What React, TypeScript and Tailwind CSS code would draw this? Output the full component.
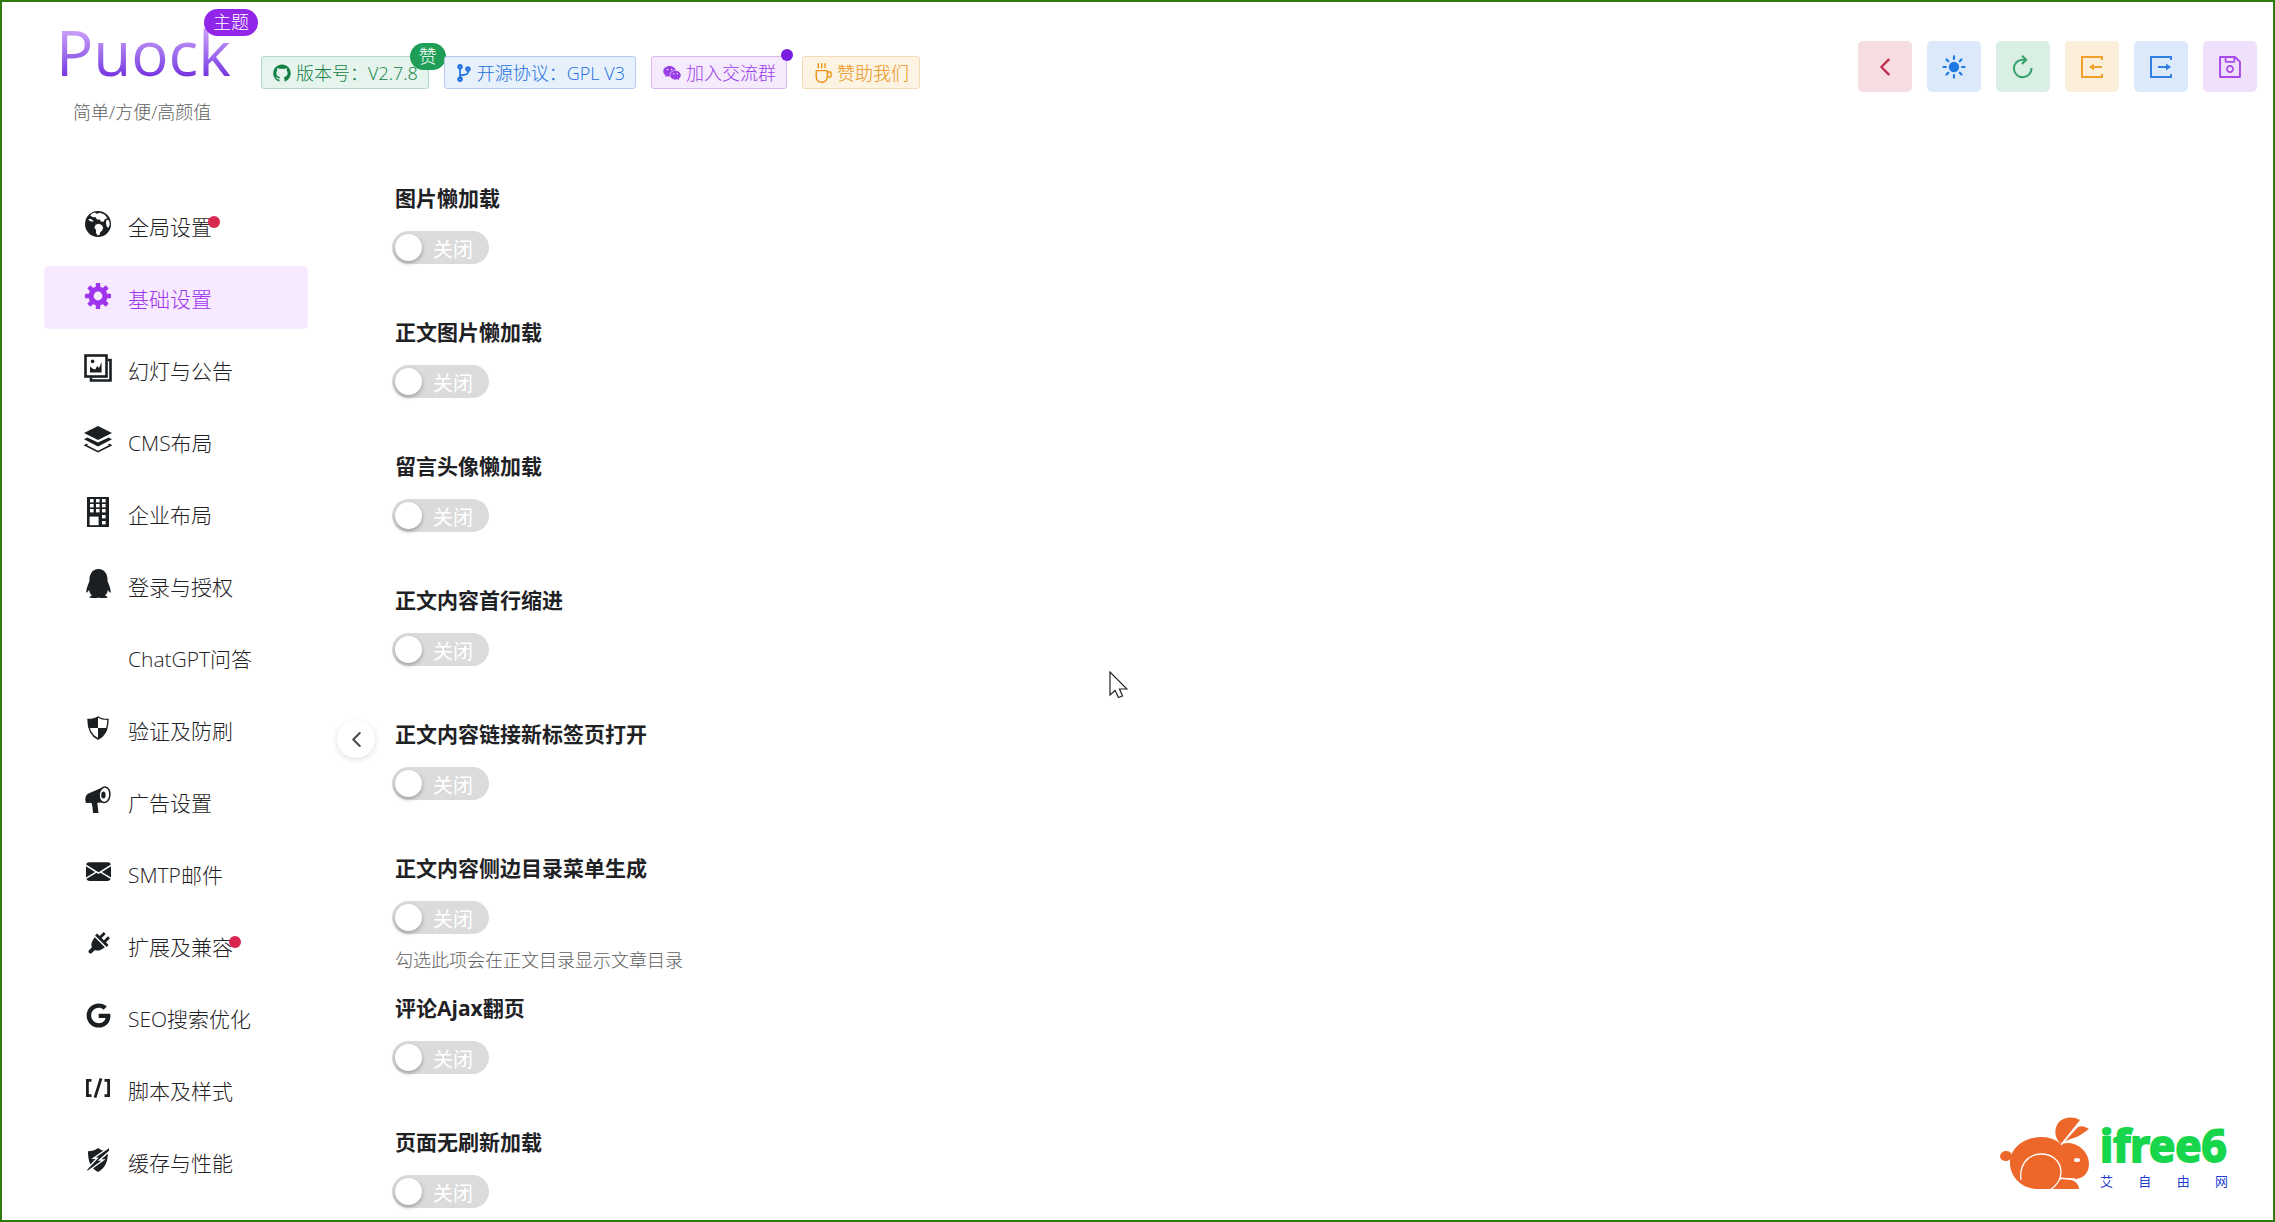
import { useState } from "react";
import type { ReactNode } from "react";
import { AiFillWechat, AiOutlineCoffee, AiOutlineGithub, AiOutlineSave } from "react-icons/ai";
import { BsEnvelopeFill } from "react-icons/bs";
import { FaCodeBranch, FaGoogle, FaQq } from "react-icons/fa";
import { ImPowerCord } from "react-icons/im";
import { IoChevronBack, IoSunny } from "react-icons/io5";

/* ---------- icons ---------- */

function EarthIcon() {
    return (
        <svg viewBox="0 0 26 26" width="26" height="26" fill="currentColor" aria-hidden="true">
            <circle cx="13" cy="13" r="13" />
            <path fill="#fff" d="M7 2.600 10 1.600l1.600 1.200 3.400-1 4.400 1.600 3 3.600-2.800 1.600-1 2.200-2.600-.2-1.400-2.200-2.600.2L10.500 6 8 6.200 5.200 4.400z" />
            <path fill="#fff" d="m3 8.600 2.600-.8 3 2.200-1 .8-2.600-.8z" />
            <path fill="#fff" d="m21.600 8.600 2.400 1 .8 3.400-1.200 3.800-1.800-1-.8-3.600z" />
            <path fill="#fff" d="m10.600 13.800 3-1 3.200 1.200 1.400 2.400-1 3.200-2 1.600-.6 2.600-1.800.6-1.800-2.400v-3l-1.600-2.400z" />
        </svg>
    );
}

function GearIcon() {
    return (
        <svg viewBox="0 0 26 26" width="26" height="26" fill="currentColor" aria-hidden="true">
            {[0, 45, 90, 135].map((deg) => (
                <rect key={deg} x="10.800" y="0" width="4.400" height="26" rx="0.500" transform={`rotate(${deg} 13 13)`} />
            ))}
            <circle cx="13" cy="13" r="9.600" />
            <circle cx="13" cy="13" r="4.400" fill="#f7eafe" />
        </svg>
    );
}

function AlbumIcon() {
    return (
        <svg viewBox="0 0 28 28" width="28" height="28" fill="none" stroke="currentColor" strokeWidth="2.600" aria-hidden="true">
            <path d="M23.500 6h3v20.500H7v-3" />
            <rect x="1.500" y="1.500" width="21" height="21" />
            <path d="M6 18.400v-6l2.400 2.200 2.800 1 2-3.600 1.800 2L17.600 8v10.400z" fill="currentColor" stroke="none" />
            <circle cx="8.600" cy="7.400" r="1.800" fill="currentColor" stroke="none" />
        </svg>
    );
}

function LayersIcon() {
    return (
        <svg viewBox="0 0 28 27" width="28" height="27" fill="currentColor" aria-hidden="true">
            <path d="m14 0 14 7-14 7L0 7z" />
            <path d="m3.400 11.600 10.600 5 10.600-5L28 13.300 14 20.400 0 13.300z" />
            <path d="m3.400 18.200-2 1L14 25.600l12.600-6.400-2-1" fill="none" stroke="currentColor" strokeWidth="1.600" />
        </svg>
    );
}

function TowerIcon() {
    const cells = [
        [3, 2], [9, 2], [15, 2],
        [3, 7], [9, 7], [15, 7],
        [3, 12], [9, 12], [15, 12],
        [15, 18], [15, 24],
    ];
    return (
        <svg viewBox="0 0 22 30" width="22" height="30" fill="currentColor" aria-hidden="true">
            <path d="M0 0h22v30H0z" />
            {cells.map(([x, y]) => (
                <rect key={`${x}-${y}`} x={x} y={y} width="3.600" height="3.400" fill="#fff" />
            ))}
            <path fill="#fff" d="M2.600 19.600h9v8.600h-9z" />
        </svg>
    );
}

function ShieldIcon() {
    return (
        <svg viewBox="0 0 22 24" width="22" height="24" aria-hidden="true">
            <path d="M11 1c3 2 6.500 2.400 10 2.400C21 12 19 19 11 23 3 19 1 12 1 3.400 4.500 3.400 8 3 11 1z" fill="none" stroke="currentColor" strokeWidth="1.400" />
            <path d="M11 1v11H1.600C1 9 1 6 1 3.400 4.500 3.400 8 3 11 1zM11 12h9.400C19.400 17 16.500 20.500 11 23z" fill="currentColor" />
        </svg>
    );
}

function HornIcon() {
    return (
        <svg viewBox="0 0 26 27" width="26" height="27" fill="currentColor" aria-hidden="true">
            <path d="M19 .8 3.500 7.500C.5 9-.5 13 1 17l18-.5z" />
            <path d="m6 15 6-.5.500 4 1 8.500H8l-.5-6z" />
            <ellipse cx="19.500" cy="8.800" rx="5.400" ry="7.800" fill="#fff" stroke="currentColor" strokeWidth="1.500" transform="rotate(6 19.500 8.800)" />
            <ellipse cx="18.400" cy="9" rx="2.200" ry="3.600" />
        </svg>
    );
}

function ScriptIcon() {
    return (
        <svg viewBox="0 0 26 20" width="26" height="20" fill="none" stroke="currentColor" strokeWidth="2.800" aria-hidden="true">
            <path d="M6.500 2.400H2.400v15.200h4.100M19.500 2.400h4.100v15.200h-4.100M16 .4 10 19.600" />
        </svg>
    );
}

function FlashShieldIcon() {
    return (
        <svg viewBox="0 0 22 24" width="22" height="24" fill="currentColor" aria-hidden="true">
            <path d="M11 0c3 2.500 6 3.200 10 3.200C21 12 19 20 11 24 3 20 1 12 1 3.200 5 3.200 8 2.500 11 0z" />
            <path d="M24-2 6.500 10.200h3.700L-1 22l1.500 1.500L16.500 12h-4L24 2z" stroke="#fff" strokeWidth="1.400" />
        </svg>
    );
}

function ReloadIcon() {
    return (
        <svg viewBox="0 0 22 24" width="22" height="24" fill="none" stroke="currentColor" strokeWidth="2" aria-hidden="true">
            <path d="M19.500 13a8.800 8.800 0 1 1-8.700-8.300H14" />
            <path d="m10 .8 4.200 3.900L10 9" />
        </svg>
    );
}

function ImportIcon() {
    return (
        <svg viewBox="0 0 22 22" width="22" height="22" fill="none" stroke="currentColor" strokeWidth="2" aria-hidden="true">
            <path d="M21 4V1H1v20h20v-3M21 11h-9" />
            <path d="m8 11 5-3.500v7z" fill="currentColor" stroke="none" />
        </svg>
    );
}

function ExportIcon() {
    return (
        <svg viewBox="0 0 22 22" width="22" height="22" fill="none" stroke="currentColor" strokeWidth="2" aria-hidden="true">
            <path d="M21 4V1H1v20h20v-3M8 11h9" />
            <path d="m21 11-5-3.500v7z" fill="currentColor" stroke="none" />
        </svg>
    );
}

function Rabbit() {
    return (
        <svg viewBox="0 0 90 74" width="90" height="74" fill="#ec6729" aria-hidden="true">
            <ellipse cx="6" cy="39" rx="6" ry="5" transform="rotate(-12 6 39)" />
            <path d="M42 20c8 0 14 3 19 7 3-1 5-1 8-1 11 1 20 10 20 21 0 9-6 15-15 15-5 0-10-1-14-1l-6 10c-3 1-8 1-16 1-17 0-28-13-28-26 0-15 14-26 32-26z" />
            <path d="M49 72c2-6 8-10 16-10 8 0 14 4 14 10z" />
            <path d="M60 26c-6-6-6-15-1-21 5-5 14-6 21-2L61 27z" />
            <path d="M64 25 78 10c4-2 8 0 11 2-5 3-9 7-15 9-4 1-7 2-10 4z" />
            <path d="M21 63c-2-14 6-26 20-26 12 0 20 8 20 18 0 8-5 14-11 18M60 61c6 1 10 1 15 1M61 28 80 5" fill="none" stroke="#fff" strokeWidth="1.300" />
            <ellipse cx="77" cy="43" rx="3" ry="2" fill="#fff" />
        </svg>
    );
}

/* ---------- data ---------- */

const menu: { label: string; icon?: ReactNode; dot?: boolean }[] = [
    { label: "全局设置", icon: <EarthIcon />, dot: true },
    { label: "基础设置", icon: <GearIcon /> },
    { label: "幻灯与公告", icon: <AlbumIcon /> },
    { label: "CMS布局", icon: <LayersIcon /> },
    { label: "企业布局", icon: <TowerIcon /> },
    { label: "登录与授权", icon: <FaQq size={29} /> },
    { label: "ChatGPT问答" },
    { label: "验证及防刷", icon: <ShieldIcon /> },
    { label: "广告设置", icon: <HornIcon /> },
    { label: "SMTP邮件", icon: <BsEnvelopeFill size={25} /> },
    { label: "扩展及兼容", icon: <ImPowerCord size={23} />, dot: true },
    { label: "SEO搜索优化", icon: <FaGoogle size={25} /> },
    { label: "脚本及样式", icon: <ScriptIcon /> },
    { label: "缓存与性能", icon: <FlashShieldIcon /> },
];

const actions = [
    { label: "返回", icon: <IoChevronBack size={26} />, style: "bg-[#f6dde1] text-[#c0304f]" },
    { label: "切换主题", icon: <IoSunny size={26} />, style: "bg-[#dce9fb] text-[#1f7ae5]" },
    { label: "重置", icon: <ReloadIcon />, style: "bg-[#d9efe3] text-[#35a06a]" },
    { label: "导入", icon: <ImportIcon />, style: "bg-[#fbeeda] text-[#f0a02b]" },
    { label: "导出", icon: <ExportIcon />, style: "bg-[#dce9fb] text-[#2f7fe5]" },
    { label: "保存", icon: <AiOutlineSave size={28} />, style: "bg-[#f0e0fb] text-[#a94bea]" },
];

const options: { label: string; desc?: string }[] = [
    { label: "图片懒加载" },
    { label: "正文图片懒加载" },
    { label: "留言头像懒加载" },
    { label: "正文内容首行缩进" },
    { label: "正文内容链接新标签页打开" },
    { label: "正文内容侧边目录菜单生成", desc: "勾选此项会在正文目录显示文章目录" },
    { label: "评论Ajax翻页" },
    { label: "页面无刷新加载" },
];

/* ---------- parts ---------- */

function Tag({ icon, style, children }: { icon: ReactNode; style: string; children: ReactNode }) {
    return (
        <a href="#" className={`relative flex h-[33px] items-center gap-1 rounded-[3px] border px-[10px] text-lg leading-none whitespace-nowrap ${style}`}>
            {icon}
            {children}
        </a>
    );
}

function Option({ label, desc }: { label: string; desc?: string }) {
    const [on, setOn] = useState(false);
    return (
        <div>
            <label htmlFor={label} className="block px-[3px] text-[21px] leading-8 font-bold text-[#1f2225]">
                {label}
            </label>
            <div className="relative mt-[17px] h-[33px] w-[97px]">
                <input
                    id={label}
                    type="checkbox"
                    role="switch"
                    checked={on}
                    onChange={() => setOn(!on)}
                    className="peer block h-full w-full cursor-pointer appearance-none rounded-full bg-[#dbdbdb] checked:bg-[#a855f7]"
                />
                <span className="pointer-events-none absolute top-[3px] left-[3px] size-[27px] rounded-full bg-white shadow-[0_2px_4px_rgba(0,0,0,0.3)] peer-checked:left-[67px]" />
                <span className="pointer-events-none absolute top-0.5 left-[41px] text-xl leading-[33px] font-normal text-white peer-checked:left-4">
                    {on ? "开启" : "关闭"}
                </span>
            </div>
            {desc ? <p className="h-[58px] px-[3px] pt-[10px] text-lg leading-8 text-[#606060]">{desc}</p> : <div className="h-[52px]" />}
        </div>
    );
}

export default function App() {
    const [active, setActive] = useState(1);

    return (
        <div className="relative flex h-screen flex-col overflow-hidden border-2 border-[#2f7a0f] bg-white font-['Open_Sans','Noto_Sans_CJK_SC',sans-serif] font-light text-[#1f2225]">
            <header className="flex shrink-0 items-start pr-4 pl-[54px]">
                <div className="relative w-[174px] pt-[17px]">
                    <h1 className="bg-gradient-to-b from-[#c79bf7] from-20% to-[#7a35e0] to-85% bg-clip-text text-[62px] leading-[66px] font-normal text-transparent">Puock</h1>
                    <span className="absolute top-[7px] left-[148px] rounded-full bg-[#9125e8] px-[9px] text-lg leading-[27px] whitespace-nowrap text-white">主题</span>
                    <p className="px-[17px] pt-[11px] text-lg leading-8 whitespace-nowrap text-[#606060]">简单/方便/高颜值</p>
                </div>

                <div className="flex gap-[15px] pt-[54px] pl-[31px]">
                    <Tag icon={<AiOutlineGithub size={20} />} style="border-[#b5d8cb] bg-[#e5f4ed] text-[#138046]">
                        版本号：V2.7.8
                        <span className="absolute -top-[14px] -right-[18px] rounded-full bg-[#1f9e58] px-[9px] leading-[27px] text-white">赞</span>
                    </Tag>
                    <Tag icon={<FaCodeBranch size={18} />} style="border-[#b3cbee] bg-[#e6f1fc] text-[#1f6fdd]">
                        开源协议：GPL V3
                    </Tag>
                    <Tag icon={<AiFillWechat size={20} />} style="border-[#d9b8f0] bg-[#f6eafd] text-[#9a3fe8]">
                        加入交流群
                        <span className="absolute -top-2 -right-[7px] size-3 rounded-full bg-[#7a1fe0]" />
                    </Tag>
                    <Tag icon={<AiOutlineCoffee size={20} />} style="border-[#f3dbb8] bg-[#fdf3e3] text-[#ea9416]">
                        赞助我们
                    </Tag>
                </div>

                <div className="ml-auto flex gap-[15px] pt-[39px]">
                    {actions.map((a) => (
                        <button key={a.label} type="button" aria-label={a.label} className={`flex h-[51px] w-[54px] cursor-pointer items-center justify-center rounded-[5px] ${a.style}`}>
                            {a.icon}
                        </button>
                    ))}
                </div>
            </header>

            <div className="relative flex min-h-0 grow pt-[54px]">
                <nav className="flex w-[312px] shrink-0 flex-col gap-[9px] pt-[12px] pr-[6px] pl-[42px]">
                    {menu.map((m, i) => (
                        <a
                            key={m.label}
                            href="#"
                            onClick={() => setActive(i)}
                            className={`flex h-[63px] shrink-0 items-center rounded-[5px] pl-[38px] text-[21px] ${i === active ? "bg-[#f7eafe] text-[#a035ee]" : ""}`}
                        >
                            <span className={`flex w-8 justify-center pb-1 ${i === active ? "" : "text-[#1b1f22]"}`}>{m.icon}</span>
                            <span className="relative ml-[14px] pt-1">
                                {m.label}
                                {m.dot && <span className="absolute top-2 -right-2 size-3 rounded-full bg-[#d8284f]" />}
                            </span>
                        </a>
                    ))}
                </nav>

                <main className="min-w-0 grow overflow-y-auto pl-[78px] [scrollbar-width:none]">
                    {options.map((o) => (
                        <Option key={o.label} {...o} />
                    ))}
                </main>

                <button
                    type="button"
                    aria-label="收起菜单"
                    className="absolute top-[592px] left-[335px] flex size-[38px] cursor-pointer items-center justify-center rounded-full bg-white text-[#4a4d50] shadow-[0_2px_6px_rgba(0,0,0,0.12)]"
                >
                    <IoChevronBack size={23} />
                </button>
            </div>

            <div className="absolute right-[45px] bottom-[29px] flex items-end gap-[10px]">
                <Rabbit />
                <div className="w-[128px]">
                    <div className="font-['Noto_Sans',sans-serif] text-[44px] leading-[52px] font-bold text-[#18d64c] [-webkit-text-stroke:2px_#18d64c]">ifree6</div>
                    <div className="flex justify-between text-[13px] leading-5 font-normal text-[#1f3fd0]">
                        <span>艾</span>
                        <span>自</span>
                        <span>由</span>
                        <span>网</span>
                    </div>
                </div>
            </div>

            {/* pointer */}
            <svg viewBox="0 0 19 28" width="19" height="28" className="pointer-events-none absolute top-[669px] left-[1107px]" aria-hidden="true">
                <path d="M1 1v23l5-4.500 3.500 7 4-1.500-3-7H18z" fill="#fff" stroke="#222" strokeWidth="1.200" />
            </svg>
        </div>
    );
}
